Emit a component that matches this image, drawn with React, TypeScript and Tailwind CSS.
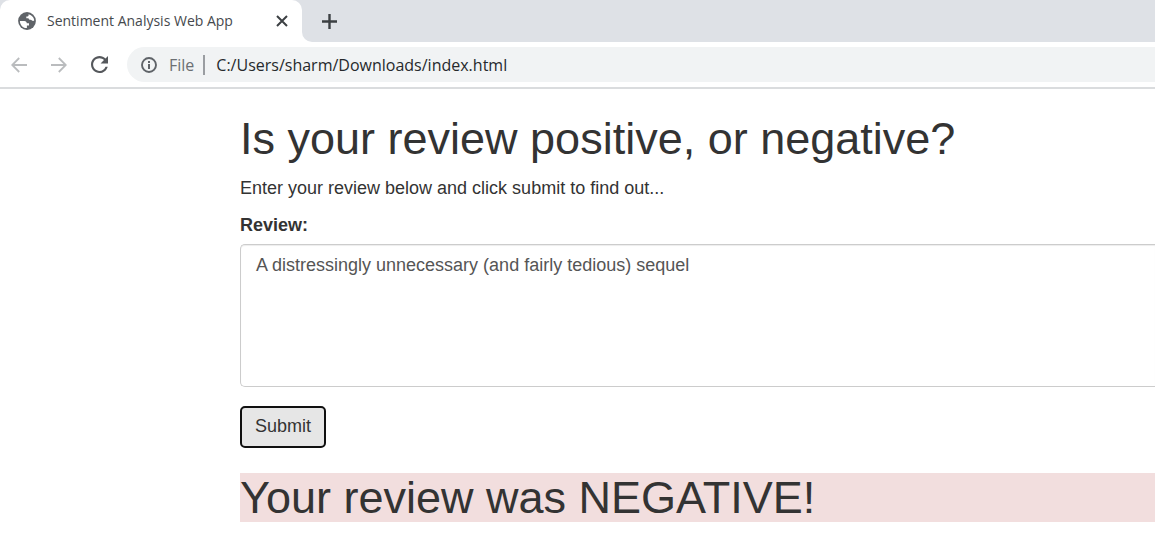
import { useState } from "react";

function GlobeIcon() {
  return (
    <svg viewBox="0 0 18 18" className="size-[18px] shrink-0" aria-hidden="true">
      <circle cx="9" cy="9" r="8.900" fill="#5f6368" />
      <path
        fill="#fff"
        d="M10.600 2.200C14 3 16.200 5.800 16.200 8.600c-.8.6-1.700.5-2.200-.1-.4-.5-.9-.7-1.700-.7-1.100 0-1.800-.6-1.800-1.500H8.300V4.400h1.200c.8 0 1.200-.6 1.100-2.200z"
      />
      <path
        fill="#fff"
        d="M1.900 8.900h4.400c1.700 0 2.500.9 2.500 2.400h2.200v2.300H8.900v2.500C5 16.100 1.900 13 1.900 8.900z"
      />
    </svg>
  );
}

function BackIcon() {
  return (
    <svg viewBox="0 0 16 16" className="size-4" fill="none" stroke="currentColor" strokeWidth="1.800" aria-hidden="true">
      <path d="M16 8H1.500M8.200 1L1.200 8l7 7" />
    </svg>
  );
}

function ForwardIcon() {
  return (
    <svg viewBox="0 0 16 16" className="size-4" fill="none" stroke="currentColor" strokeWidth="1.800" aria-hidden="true">
      <path d="M0 8h14.500M7.800 1l7 7-7 7" />
    </svg>
  );
}

function ReloadIcon() {
  return (
    <svg viewBox="4 4 16 16" className="size-[17px]" aria-hidden="true">
      <path
        fill="currentColor"
        d="M17.650 6.350C16.200 4.900 14.210 4 12 4c-4.420 0-7.990 3.580-7.990 8s3.570 8 7.990 8c3.730 0 6.840-2.550 7.730-6h-2.080c-.82 2.330-3.040 4-5.650 4-3.310 0-6-2.690-6-6s2.690-6 6-6c1.660 0 3.140.69 4.220 1.780L13 11h7V4l-2.350 2.350z"
      />
    </svg>
  );
}

function InfoIcon() {
  return (
    <svg viewBox="0 0 16 16" className="size-4 shrink-0" aria-hidden="true">
      <circle cx="8" cy="8" r="7" fill="none" stroke="#5f6368" strokeWidth="1.900" />
      <path fill="#5f6368" d="M7 7h2v5H7zM7 4h2v2H7z" />
    </svg>
  );
}

function TabStrip() {
  return (
    <div className="flex h-[42px] bg-white">
      <div className="flex w-[302px] bg-[#dee1e6]">
        <div className="flex flex-1 items-center rounded-t-[10px] bg-white pr-[14px] pl-[18px]">
          <GlobeIcon />
          <span className="ml-[11px] flex-1 text-sm whitespace-nowrap text-[#45494d]">Sentiment Analysis Web App</span>
          <button type="button" aria-label="Close tab" className="text-[#3c4043]">
            <svg viewBox="0 0 12 12" className="size-3" stroke="currentColor" strokeWidth="2" aria-hidden="true">
              <path d="M1 1l10 10M11 1L1 11" />
            </svg>
          </button>
        </div>
      </div>
      <div className="flex flex-1 items-center rounded-bl-[10px] bg-[#dee1e6] pl-5">
        <button type="button" aria-label="New tab" className="text-[#3c4043]">
          <svg viewBox="0 0 15 15" className="size-[15px]" stroke="currentColor" strokeWidth="2.400" aria-hidden="true">
            <path d="M7.500 0v15M0 7.500h15" />
          </svg>
        </button>
      </div>
    </div>
  );
}

function Toolbar() {
  return (
    <div className="flex h-[47px] items-center border-b-2 border-[#dadcde] bg-white pl-[11px]">
      <button type="button" aria-label="Back" className="text-[#babcbe]">
        <BackIcon />
      </button>
      <button type="button" aria-label="Forward" className="ml-6 text-[#babcbe]">
        <ForwardIcon />
      </button>
      <button type="button" aria-label="Reload" className="ml-6 text-[#55585c]">
        <ReloadIcon />
      </button>
      <div className="ml-[19px] flex h-[35px] flex-1 items-center rounded-l-full bg-[#f1f3f4] pl-[14px]">
        <InfoIcon />
        <span className="ml-3 text-base text-[#6b6f73]">File</span>
        <span className="ml-[9px] h-5 w-[2px] bg-[#9a9da1]" />
        <input
          aria-label="Address"
          defaultValue="C:/Users/sharm/Downloads/index.html"
          className="ml-[11px] min-w-0 flex-1 bg-transparent text-base text-[#26292c] outline-none"
        />
      </div>
    </div>
  );
}

export default function App() {
  const [review, setReview] = useState("A distressingly unnecessary (and fairly tedious) sequel");

  return (
    <div className="min-h-screen overflow-hidden bg-white">
      <header className="font-['Open_Sans',sans-serif]">
        <TabStrip />
        <Toolbar />
      </header>
      <main className="pt-[25px] pl-60 font-['Liberation_Sans',Arial,sans-serif] text-lg leading-[25px] text-[#333]">
        <h1 className="text-[45px] leading-[49px]">Is your review positive, or negative?</h1>
        <p className="mt-[13px]">Enter your review below and click submit to find out...</p>
        <form className="mt-3" onSubmit={(event) => event.preventDefault()}>
          <label htmlFor="review" className="block font-bold">
            Review:
          </label>
          <textarea
            id="review"
            value={review}
            onChange={(event) => setReview(event.target.value)}
            className="mt-[6px] block h-[143px] w-full resize-none rounded-l-[5px] border border-r-0 border-[#ccc] px-[15px] py-2 text-[#555] shadow-[inset_0_1px_1px_rgba(0,0,0,0.075)] outline-none"
          />
          <button
            type="submit"
            className="mt-[19px] block rounded-[5px] border-2 border-[#101010] bg-[#e6e6e6] px-[13px] pt-[6px] pb-[7px]"
          >
            Submit
          </button>
        </form>
        <h1 className="mt-[25px] bg-[#f2dede] text-[45px] leading-[49px]">Your review was NEGATIVE!</h1>
      </main>
    </div>
  );
}
